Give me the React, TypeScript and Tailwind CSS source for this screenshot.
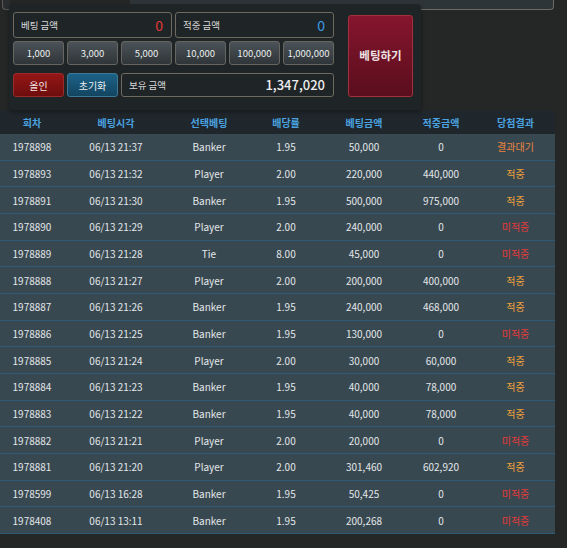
import clsx from 'clsx'

type Result = '결과대기' | '적중' | '미적중'

const ROWS: [string, string, string, string, string, string, Result][] = [
  ['1978898', '06/13 21:37', 'Banker', '1.95', '50,000', '0', '결과대기'],
  ['1978893', '06/13 21:32', 'Player', '2.00', '220,000', '440,000', '적중'],
  ['1978891', '06/13 21:30', 'Banker', '1.95', '500,000', '975,000', '적중'],
  ['1978890', '06/13 21:29', 'Player', '2.00', '240,000', '0', '미적중'],
  ['1978889', '06/13 21:28', 'Tie', '8.00', '45,000', '0', '미적중'],
  ['1978888', '06/13 21:27', 'Player', '2.00', '200,000', '400,000', '적중'],
  ['1978887', '06/13 21:26', 'Banker', '1.95', '240,000', '468,000', '적중'],
  ['1978886', '06/13 21:25', 'Banker', '1.95', '130,000', '0', '미적중'],
  ['1978885', '06/13 21:24', 'Player', '2.00', '30,000', '60,000', '적중'],
  ['1978884', '06/13 21:23', 'Banker', '1.95', '40,000', '78,000', '적중'],
  ['1978883', '06/13 21:22', 'Banker', '1.95', '40,000', '78,000', '적중'],
  ['1978882', '06/13 21:21', 'Player', '2.00', '20,000', '0', '미적중'],
  ['1978881', '06/13 21:20', 'Player', '2.00', '301,460', '602,920', '적중'],
  ['1978599', '06/13 16:28', 'Banker', '1.95', '50,425', '0', '미적중'],
  ['1978408', '06/13 13:11', 'Banker', '1.95', '200,268', '0', '미적중'],
]

const RESULT_COLOR: Record<Result, string> = {
  결과대기: 'text-[#e8843c]',
  적중: 'text-[#f0a33a]',
  미적중: 'text-[#e23a3a]',
}

const HEADERS = ['회차', '베팅시각', '선택베팅', '배당률', '베팅금액', '적중금액', '당첨결과']
const CHIPS = ['1,000', '3,000', '5,000', '10,000', '100,000', '1,000,000']
const COLS = 'grid grid-cols-[64px_104px_82px_72px_84px_70px_79px]'

export default function App() {
  return (
    <div className="min-h-[548px] w-[567px] bg-[#252727] text-[#e3e7ea]" style={{ fontFamily: "'Noto Sans CJK KR', 'Noto Sans', sans-serif" }}>
      {/* clipped strip above the panel */}
      <div className="flex h-[10px]">
        <div className="ml-[2px] h-[10px] w-[8px] rounded-bl-[4px] border-b border-l border-[#5d5a54] bg-[#2a2e30]" />
        <div className="ml-[120px] h-[10px] w-[424px] rounded-br-[4px] border-b border-r border-[#6e6a60] bg-[#2e3538]" />
      </div>

      {/* betting panel */}
      <div className="relative z-10 -mt-[6px] ml-[9px] flex w-[412px] rounded-[4px] bg-[#1f2427] pb-[13px] pl-[4px] pr-[8px] pt-[8px] shadow-[0_2px_4px_rgba(0,0,0,0.35)]">
        <div className="w-[321px]">
          <div className="flex gap-[3px]">
            <div className="flex h-[26px] w-[159px] items-center justify-between rounded-[3px] border border-[#6e6a60] pl-[7px] pr-[8px]">
              <span className="text-[9.5px] text-[#d8d8d8]">베팅 금액</span>
              <span className="text-[14px] text-[#e23a3a]">0</span>
            </div>
            <div className="flex h-[26px] w-[159px] items-center justify-between rounded-[3px] border border-[#6e6a60] pl-[7px] pr-[8px]">
              <span className="text-[9.5px] text-[#d8d8d8]">적중 금액</span>
              <span className="text-[14px] text-[#3d9ce8]">0</span>
            </div>
          </div>
          <div className="mt-[3px] grid grid-cols-6 gap-[3px]">
            {CHIPS.map((c) => (
              <button key={c} className="flex h-[24px] items-center justify-center rounded-[3px] border border-[#67655f] bg-gradient-to-b from-[#4c5358] to-[#2f3538] text-[9.5px] text-[#eceff1]">
                {c}
              </button>
            ))}
          </div>
          <div className="mt-[8px] flex gap-[3px]">
            <button className="flex h-[24px] w-[51px] items-center justify-center rounded-[3px] border border-[#9b2a2a] bg-gradient-to-b from-[#951616] to-[#6e0d0d] text-[10px] text-[#f2e6e6]">
              올인
            </button>
            <button className="flex h-[24px] w-[51px] items-center justify-center rounded-[3px] border border-[#3f7896] bg-gradient-to-b from-[#1d6287] to-[#134560] text-[10px] text-[#e8eef2]">
              초기화
            </button>
            <div className="flex h-[24px] w-[213px] items-center justify-between rounded-[3px] border border-[#6e6a60] pl-[7px] pr-[8px]">
              <span className="text-[9.5px] text-[#d8d8d8]">보유 금액</span>
              <span className="text-[13px] font-medium text-[#eceeef]">1,347,020</span>
            </div>
          </div>
        </div>
        <button className="ml-[14px] mt-[3px] flex h-[82px] w-[65px] items-center justify-center rounded-[3px] border border-[#a3303c] bg-gradient-to-b from-[#86152e] to-[#5a0e1d] text-[11.5px] font-bold text-[#ece2e4]">
          베팅하기
        </button>
      </div>

      {/* history table */}
      <div className="mt-px w-[555px]">
        <div className={clsx(COLS, 'h-[23px] items-center bg-[#1f262c] text-[10px] font-bold text-[#4aa3e0]')}>
          {HEADERS.map((h) => (
            <div key={h} className="text-center">{h}</div>
          ))}
        </div>
        {ROWS.map((r) => (
          <div key={r[0]} className={clsx(COLS, 'h-[26.67px] items-center border-b border-[#2f5a76] bg-[#384850] text-[10px]')}>
            {r.slice(0, 6).map((c, i) => (
              <div key={i} className="text-center">{c}</div>
            ))}
            <div className={clsx('text-center', RESULT_COLOR[r[6]])}>{r[6]}</div>
          </div>
        ))}
      </div>
    </div>
  )
}
